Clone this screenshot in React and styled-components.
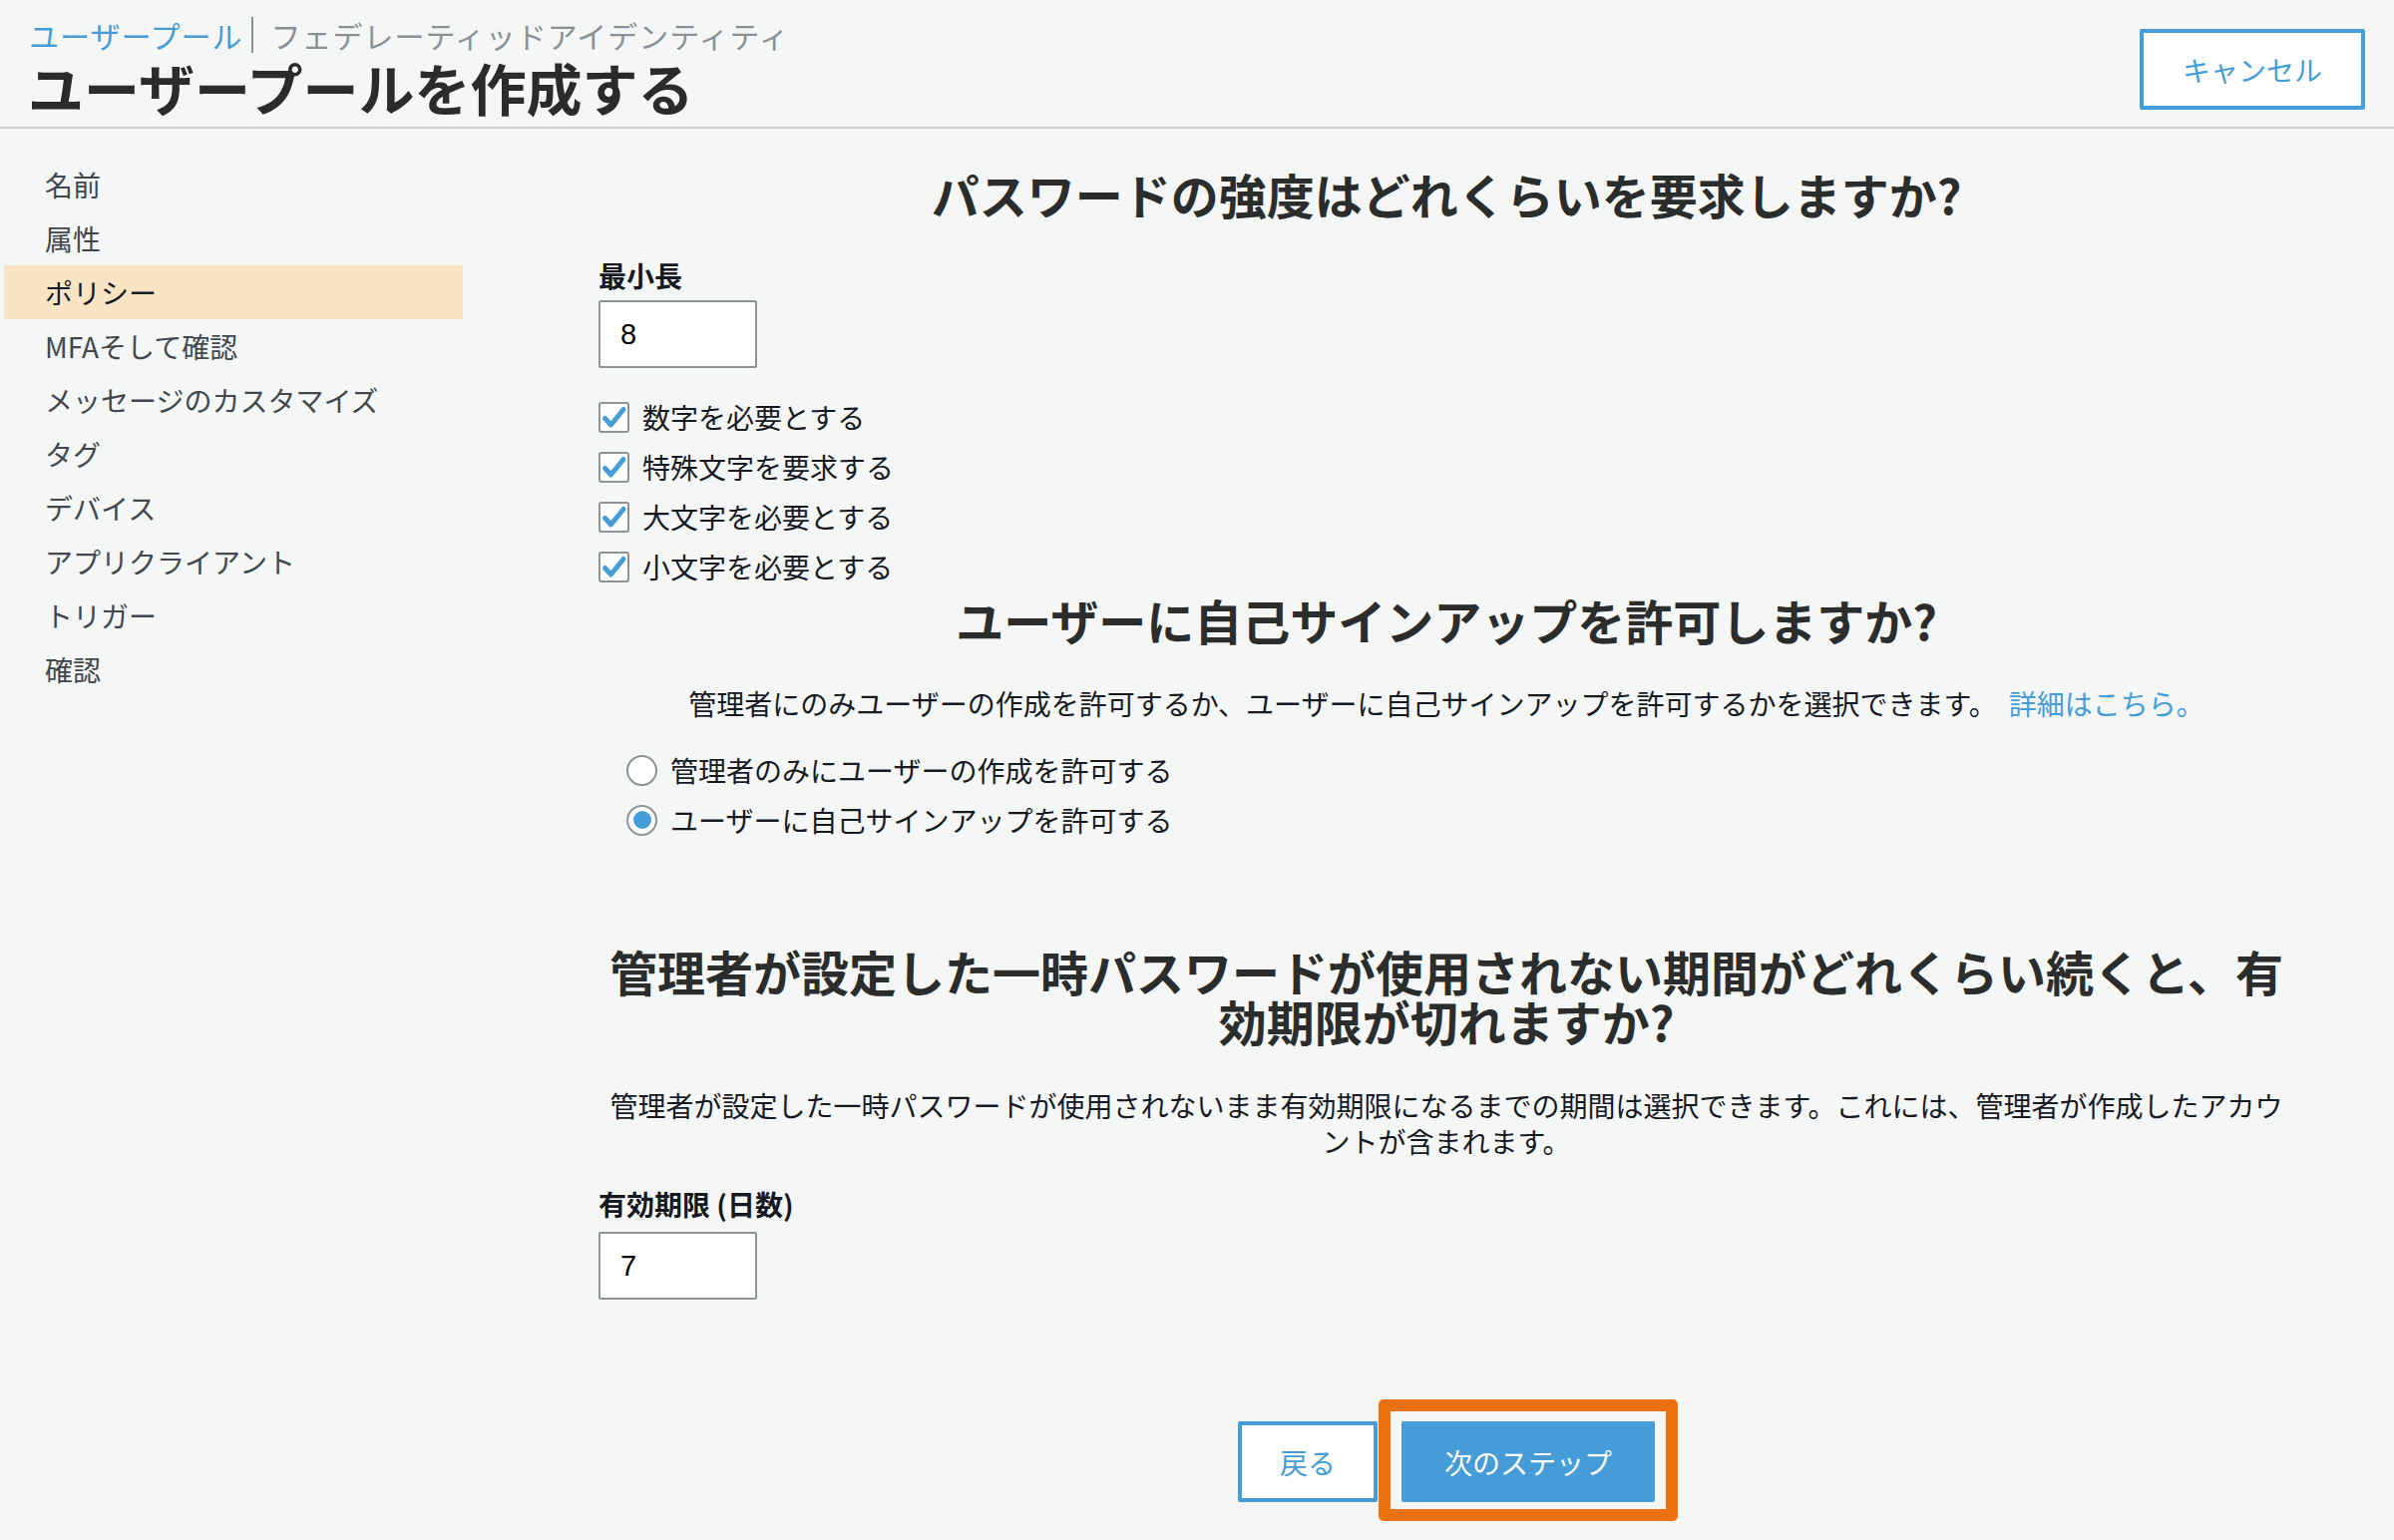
import React from "react";
import styled, { createGlobalStyle } from "styled-components";

const GlobalStyle = createGlobalStyle`
  html, body {
    margin: 0;
    padding: 0;
    background: #f5f6f6;
  }
  body {
    font-family: "Noto Sans CJK JP", "Noto Sans", sans-serif;
    color: #16191f;
  }
  * {
    box-sizing: border-box;
  }
`;

const blue = "#459cd6";
const grayBorder = "#8d9396";

const Page = styled.div`
  min-height: 1544px;
  background: #f5f6f6;
`;

const Header = styled.header`
  display: flex;
  justify-content: space-between;
  align-items: flex-start;
  height: 129px;
  padding: 13px 29px 0 29px;
  border-bottom: 2px solid #cfd1d1;
`;

const TitleBlock = styled.div`
  display: flex;
  flex-direction: column;
`;

const Breadcrumb = styled.div`
  display: flex;
  align-items: center;
  height: 44px;
  font-size: 30px;
  line-height: 44px;
  letter-spacing: 1px;
`;

const CrumbLink = styled.a`
  color: ${blue};
  text-decoration: none;
`;

const CrumbSep = styled.span`
  width: 2px;
  height: 36px;
  margin: 0 18px 0 8px;
  background: #8c9194;
`;

const CrumbCurrent = styled.span`
  color: #8c9194;
`;

const Title = styled.h1`
  margin: -2px 0 0 -1px;
  font-size: 56px;
  line-height: 64px;
  font-weight: 700;
  color: #2a2b2b;
`;

const OutlineButton = styled.button`
  width: ${(p) => p.$w}px;
  height: 81px;
  margin-top: ${(p) => p.$top || 0}px;
  background: #ffffff;
  border: 4px solid ${blue};
  border-radius: 2px;
  color: ${blue};
  font-family: inherit;
  font-size: 28px;
  cursor: pointer;
`;

const SolidButton = styled.button`
  width: ${(p) => p.$w}px;
  height: 81px;
  background: ${blue};
  border: none;
  border-radius: 2px;
  color: #ffffff;
  font-family: inherit;
  font-size: 28px;
  cursor: pointer;
`;

const Body = styled.div`
  display: grid;
  grid-template-columns: 464px 1700px;
  column-gap: 136px;
`;

const Sidebar = styled.nav`
  padding: 29px 0 0 4px;
  display: flex;
  flex-direction: column;
`;

const NavItem = styled.div`
  height: 54px;
  line-height: 54px;
  padding-left: 41px;
  font-size: 28px;
  color: ${(p) => (p.$active ? "#16191f" : "#42474d")};
  background: ${(p) => (p.$active ? "#f9e4c4" : "transparent")};
`;

const Main = styled.main`
  padding-top: 40px;
  display: flex;
  flex-direction: column;
`;

const Heading = styled.h2`
  margin: ${(p) => p.$top || 0}px 0 0 0;
  font-size: 48px;
  line-height: 50px;
  font-weight: 700;
  text-align: center;
  color: #2b2d2d;
`;

const Description = styled.p`
  margin: ${(p) => p.$top || 0}px 0 0 0;
  font-size: 28px;
  line-height: 36px;
  text-align: center;
  color: #16191f;
`;

const TextLink = styled.a`
  color: ${blue};
  text-decoration: none;
  margin-left: 12px;
`;

const FieldLabel = styled.label`
  display: block;
  margin-top: ${(p) => p.$top || 0}px;
  font-size: 28px;
  line-height: 36px;
  font-weight: 700;
  color: #16191f;
`;

const NumberInput = styled.input`
  display: block;
  width: 159px;
  height: 68px;
  margin-top: ${(p) => p.$top || 7}px;
  padding: 0 0 0 20px;
  background: #ffffff;
  border: 2px solid ${grayBorder};
  border-radius: 2px;
  font-family: "Liberation Sans", Arial, sans-serif;
  font-size: 29px;
  color: #000000;
  outline: none;
`;

const OptionList = styled.div`
  display: flex;
  flex-direction: column;
  margin-top: 24px;
  padding-left: ${(p) => p.$indent || 0}px;
`;

const OptionRow = styled.label`
  display: flex;
  align-items: center;
  gap: 13px;
  height: 50px;
  font-size: 28px;
  color: #16191f;
`;

const CheckBox = styled.span`
  display: inline-flex;
  align-items: center;
  justify-content: center;
  width: 31px;
  height: 31px;
  background: #ffffff;
  border: 2px solid ${grayBorder};
  border-radius: 3px;
`;

const Radio = styled.span`
  position: relative;
  display: inline-block;
  width: 31px;
  height: 31px;
  border-radius: 50%;
  background: #ffffff;
  border: 2px solid ${grayBorder};

  &::after {
    content: "";
    display: ${(p) => (p.$checked ? "block" : "none")};
    position: absolute;
    left: 4.5px;
    top: 4.5px;
    width: 18px;
    height: 18px;
    border-radius: 50%;
    background: ${blue};
  }
`;

const ButtonRow = styled.div`
  display: flex;
  justify-content: center;
  gap: 24px;
  margin-top: 122px;
`;

const Highlighted = styled.div`
  position: relative;
  display: flex;
`;

const Annotation = styled.span`
  position: absolute;
  left: -23px;
  right: -23px;
  top: -22px;
  bottom: -19px;
  border: 12px solid #ec7211;
  border-radius: 5px;
  pointer-events: none;
`;

const navItems = [
  "名前",
  "属性",
  "ポリシー",
  "MFAそして確認",
  "メッセージのカスタマイズ",
  "タグ",
  "デバイス",
  "アプリクライアント",
  "トリガー",
  "確認",
];

const checks = [
  "数字を必要とする",
  "特殊文字を要求する",
  "大文字を必要とする",
  "小文字を必要とする",
];

const radios = [
  { label: "管理者のみにユーザーの作成を許可する", checked: false },
  { label: "ユーザーに自己サインアップを許可する", checked: true },
];

function CheckMark() {
  return (
    <svg width="27" height="27" viewBox="0 0 27 27">
      <path
        d="M4.5 14.5 L10.5 21 L23 5.5"
        fill="none"
        stroke={blue}
        strokeWidth="5"
        strokeLinecap="round"
        strokeLinejoin="round"
      />
    </svg>
  );
}

export default function App() {
  return (
    <Page>
      <GlobalStyle />
      <Header>
        <TitleBlock>
          <Breadcrumb>
            <CrumbLink href="#">ユーザープール</CrumbLink>
            <CrumbSep />
            <CrumbCurrent>フェデレーティッドアイデンティティ</CrumbCurrent>
          </Breadcrumb>
          <Title>ユーザープールを作成する</Title>
        </TitleBlock>
        <OutlineButton $w={226} $top={16}>キャンセル</OutlineButton>
      </Header>
      <Body>
        <Sidebar>
          {navItems.map((item, i) => (
            <NavItem key={i} $active={item === "ポリシー"}>
              {item}
            </NavItem>
          ))}
        </Sidebar>
        <Main>
          <Heading>パスワードの強度はどれくらいを要求しますか?</Heading>
          <FieldLabel $top={39}>最小長</FieldLabel>
          <NumberInput type="text" defaultValue="8" />
          <OptionList>
            {checks.map((c, i) => (
              <OptionRow key={i}>
                <CheckBox>
                  <CheckMark />
                </CheckBox>
                {c}
              </OptionRow>
            ))}
          </OptionList>
          <Heading $top={3}>ユーザーに自己サインアップを許可しますか?</Heading>
          <Description $top={41}>
            管理者にのみユーザーの作成を許可するか、ユーザーに自己サインアップを許可するかを選択できます。
            <TextLink href="#">詳細はこちら。</TextLink>
          </Description>
          <OptionList $indent={28}>
            {radios.map((r, i) => (
              <OptionRow key={i}>
                <Radio $checked={r.checked} />
                {r.label}
              </OptionRow>
            ))}
          </OptionList>
          <Heading $top={101}>
            管理者が設定した一時パスワードが使用されない期間がどれくらい続くと、有効期限が切れますか?
          </Heading>
          <Description $top={42}>
            管理者が設定した一時パスワードが使用されないまま有効期限になるまでの期間は選択できます。これには、管理者が作成したアカウントが含まれます。
          </Description>
          <FieldLabel $top={27}>有効期限 (日数)</FieldLabel>
          <NumberInput type="text" defaultValue="7" $top={10} />
          <ButtonRow>
            <OutlineButton $w={140}>戻る</OutlineButton>
            <Highlighted>
              <SolidButton $w={254}>次のステップ</SolidButton>
              <Annotation />
            </Highlighted>
          </ButtonRow>
        </Main>
      </Body>
    </Page>
  );
}
